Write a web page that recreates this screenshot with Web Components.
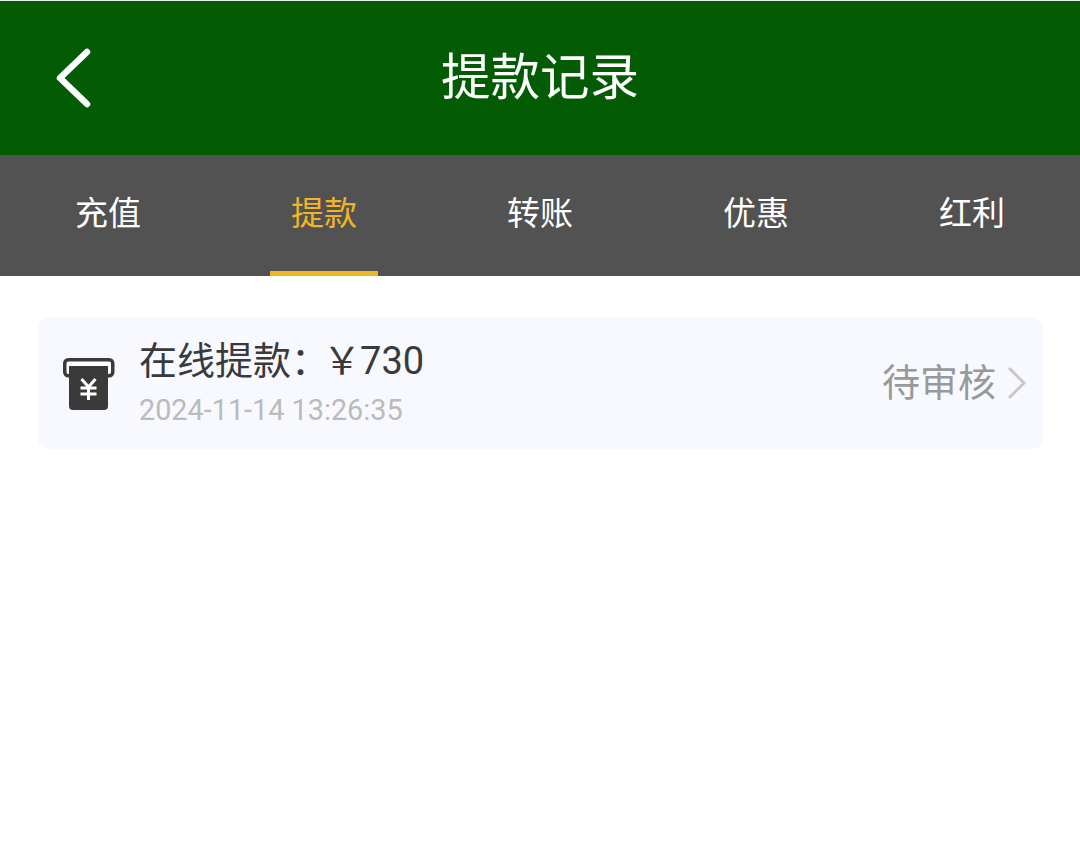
<!DOCTYPE html>
<html lang="zh">
<head>
<meta charset="utf-8">
<title>提款记录</title>
<style>
html, body { margin: 0; background: #fff; }
body { font-family: Roboto, "Noto Sans CJK SC", sans-serif; }
</style>
</head>
<body>
<nav-header>提款记录</nav-header>
<tab-bar>
  <tab-item>充值</tab-item>
  <tab-item active>提款</tab-item>
  <tab-item>转账</tab-item>
  <tab-item>优惠</tab-item>
  <tab-item>红利</tab-item>
</tab-bar>
<record-list>
  <record-card date="2024-11-14 13:26:35" status="待审核">在线提款<span style="letter-spacing:-6px">：</span><span style="letter-spacing:-1px">￥</span>730</record-card>
</record-list>

<script>
class NavHeader extends HTMLElement {
  connectedCallback() {
    this.attachShadow({ mode: 'open' });
    this.shadowRoot.innerHTML = `
<style>
:host {
  display: grid;
  grid-template-columns: 1fr auto 1fr;
  align-items: center;
  height: 154px;
  border-top: 1px solid #e9f0e9;
  background: #035c03;
  color: #fff;
}
svg { display: block; margin-left: 52px; }
.title { font-size: 49.5px; line-height: 1; padding-top: 2px; }
</style>
<svg width="44" height="64" viewBox="0 0 44 64" fill="none">
  <path d="M35 6 L8 32 L35 58" stroke="#fff" stroke-width="6.5" stroke-linecap="round" stroke-linejoin="round"/>
</svg>
<div class="title"><slot></slot></div>
<div></div>`;
  }
}

class TabBar extends HTMLElement {
  connectedCallback() {
    this.attachShadow({ mode: 'open' });
    this.shadowRoot.innerHTML = `
<style>
:host {
  display: grid;
  grid-template-columns: repeat(5, 1fr);
  height: 121px;
  background: #525252;
}
</style>
<slot></slot>`;
  }
}

class TabItem extends HTMLElement {
  connectedCallback() {
    this.attachShadow({ mode: 'open' });
    this.shadowRoot.innerHTML = `
<style>
:host {
  display: flex;
  flex-direction: column;
  align-items: center;
  color: #fff;
  font-size: 33px;
}
:host([active]) { color: #f0b429; }
.label { flex: 1; display: flex; align-items: center; padding-top: 1px; line-height: 1; }
.bar { width: 108px; height: 5px; }
:host([active]) .bar { background: #f0b429; }
</style>
<div class="label"><slot></slot></div>
<div class="bar"></div>`;
  }
}

class RecordList extends HTMLElement {
  connectedCallback() {
    this.attachShadow({ mode: 'open' });
    this.shadowRoot.innerHTML = `
<style>
:host { display: flex; flex-direction: column; gap: 20px; padding: 41px 37px 0 38px; }
</style>
<slot></slot>`;
  }
}

class RecordCard extends HTMLElement {
  connectedCallback() {
    this.attachShadow({ mode: 'open' });
    this.shadowRoot.innerHTML = `
<style>
:host {
  display: flex;
  align-items: center;
  height: 132px;
  background: #f8f9fe;
  border-radius: 10px;
}
.icon { display: block; margin-left: 24px; flex: none; }
.text { margin-left: 23px; margin-bottom: 2px; flex: 1; }
.name { font-size: 38px; line-height: 46px; color: #3a3a3a; }
.date { font-size: 28.8px; line-height: 34px; margin-top: 9px; color: #bbb; }
.status { font-size: 38px; line-height: 46px; color: #999; }
.arrow { display: block; margin: 0 15px 0 10px; flex: none; }
</style>
<svg class="icon" width="54" height="56" viewBox="0 0 54 56">
  <rect x="2.75" y="4.75" width="48" height="16" rx="3.5" fill="#fff" stroke="#3a3a3a" stroke-width="3.5"/>
  <path d="M7 11 H46 V51 Q46 55 42 55 H11 Q7 55 7 51 Z" fill="#3a3a3a"/>
  <path d="M19.5 24 L26.5 32 L33.5 24 M18.5 33 H34.5 M18.5 39 H34.5 M26.5 32 V45" fill="none" stroke="#fff" stroke-width="3"/>
</svg>
<div class="text">
  <div class="name"><slot></slot></div>
  <div class="date">${this.getAttribute('date')}</div>
</div>
<div class="status">${this.getAttribute('status')}</div>
<svg class="arrow" width="22" height="36" viewBox="0 0 22 36" fill="none">
  <path d="M3 3 L18 18 L3 33" stroke="#c8c8cc" stroke-width="3"/>
</svg>`;
  }
}

customElements.define('nav-header', NavHeader);
customElements.define('tab-bar', TabBar);
customElements.define('tab-item', TabItem);
customElements.define('record-list', RecordList);
customElements.define('record-card', RecordCard);
</script>
</body>
</html>
